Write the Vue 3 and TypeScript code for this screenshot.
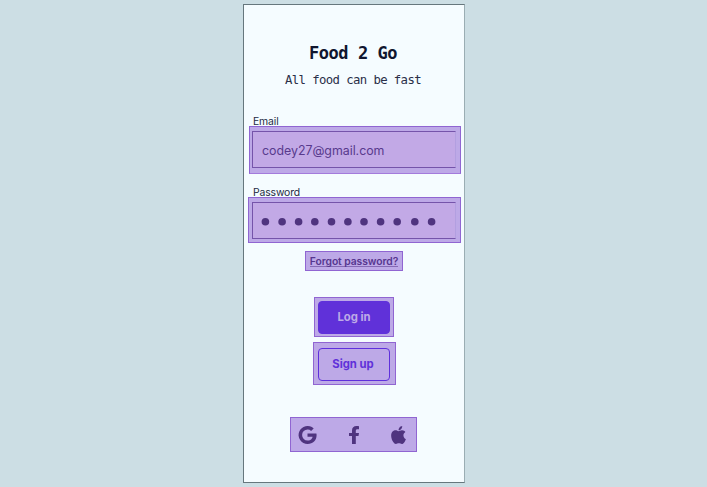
<script setup lang="ts">
const dots: number[] = [12.4, 29.1, 45.6, 61.8, 78.5, 94.9, 111, 127.6, 144.2, 161.8, 178.6]
</script>

<template>
  <main class="stage">
    <section class="phone">
      <h1 class="title">Food 2 Go</h1>
      <p class="tagline">All food can be fast</p>

      <label class="label email-label">Email</label>
      <div class="focus email-focus">
        <div class="field"><span class="value">codey27@gmail.com</span></div>
      </div>

      <label class="label password-label">Password</label>
      <div class="focus password-focus">
        <div class="field">
          <svg class="dots" viewBox="0 0 202 35" aria-label="Hidden password">
            <circle v-for="x in dots" :key="x" :cx="x" cy="18.7" r="3.8" />
          </svg>
        </div>
      </div>

      <div class="focus forgot-focus"><a class="forgot">Forgot password?</a></div>
      <div class="focus login-focus"><button class="btn primary"><span>Log in</span></button></div>
      <div class="focus signup-focus"><button class="btn outline"><span>Sign up</span></button></div>

      <div class="focus social">
        <svg class="google" viewBox="0 0 19 18">
          <path d="M9.5 7.4h8.9c.1.6.2 1.1.2 1.7 0 5.3-3.6 8.9-9 8.9A9 9 0 1 1 15.7 2.4l-2.6 2.5A5.2 5.2 0 0 0 9.6 3.5a5.5 5.5 0 1 0 0 11c3.5 0 4.8-2.5 5-3.8h-5.1z" />
        </svg>
        <svg class="facebook" viewBox="0 0 10 18">
          <path d="M9.5 10.1 10 6.900H6.800V4.800c0-.9.4-1.500 1.800-1.500H10V.2S8.700 0 7.500 0C4.700 0 3 1.600 3 4.400v2.500H0v3.200h3V18h3.800v-7.900z" />
        </svg>
        <svg class="apple" viewBox="0 32 384 448" preserveAspectRatio="none">
          <path d="M318.700 268.700c-.2-36.700 16.400-64.400 50-84.800-18.800-26.900-47.200-41.700-84.700-44.600-35.500-2.800-74.300 20.700-88.500 20.700-15 0-49.400-19.700-76.400-19.700C63.300 141.200 4 184.800 4 273.500q0 39.300 14.400 81.200c12.800 36.700 59 126.700 107.200 125.200 25.200-.6 43-17.900 75.800-17.900 31.800 0 48.300 17.900 76.400 17.900 48.600-.7 90.400-82.500 102.600-119.300-65.200-30.700-61.700-90-61.700-91.900zm-56.600-164.200c27.300-32.400 24.800-61.900 24-72.500-24.100 1.400-52 16.400-67.900 34.900-17.500 19.800-27.800 44.300-25.600 71.900 26.100 2 49.900-11.400 69.500-34.300z" />
        </svg>
      </div>
    </section>
  </main>
</template>

<style>
body {
  background: #ccdee4;
}
</style>

<style scoped>
* {
  box-sizing: border-box;
}
.stage {
  height: 487px;
  padding-top: 4px;
  padding-left: 243px;
  overflow: hidden;
  background: #ccdee4;
  font-family: Inter, "Liberation Sans", sans-serif;
}
.phone {
  display: flex;
  flex-direction: column;
  align-items: flex-start;
  width: 222px;
  height: 479px;
  border: 1px solid #66777d;
  border-right-color: #9aadb3;
  background: #f5fcff;
  color: #10162f;
}
.title,
.tagline {
  margin: 0;
  align-self: center;
  font-family: "DejaVu Sans Mono", monospace;
  white-space: pre;
}
.title {
  margin-top: 35px;
  margin-right: 2px;
  font-size: 17px;
  letter-spacing: -0.44px;
  line-height: 26px;
  font-weight: 700;
}
.tagline {
  margin-top: 5px;
  margin-right: 2px;
  font-size: 12.300px;
  letter-spacing: -0.6px;
  line-height: 18px;
  color: #2a2f48;
}
.label {
  margin-left: 9px;
  height: 13px;
  font-size: 10.400px;
  letter-spacing: -0.13px;
  line-height: 13px;
  color: #242b43;
}
.focus {
  display: flex;
  flex-shrink: 0;
  background: #bda9e7;
  border: 1px solid #9065d2;
}
.email-label {
  margin-top: 26px;
}
.email-focus {
  margin-left: 5px;
  margin-top: -2px;
  width: 212px;
  height: 48px;
  padding: 4px 0 0 2px;
  border-bottom-color: #a37bdc;
}
.field {
  display: flex;
  align-items: center;
  width: 204px;
  height: 37px;
  border: 1px solid #7554aa;
  border-right-color: #b29fe0;
  background: #c2a9e6;
}
.value {
  padding-top: 2px;
  padding-left: 9px;
  font-size: 12.400px;
  letter-spacing: -0.03px;
  color: #583a8d;
}
.password-label {
  margin-top: 12px;
}
.password-focus {
  margin-left: 4px;
  margin-top: -2px;
  width: 213px;
  height: 46px;
  padding: 4px 0 0 3px;
}
.dots {
  width: 202px;
  height: 35px;
  fill: #4f347f;
}
.forgot-focus {
  justify-content: center;
  margin: 8px 0 0 61px;
  width: 98px;
  height: 20px;
}
.forgot {
  height: 15px;
  border-bottom: 1px solid #8569b5;
  font-size: 10.300px;
  letter-spacing: -0.05px;
  line-height: 19px;
  font-weight: 600;
  color: #56368f;
  white-space: nowrap;
}
.login-focus {
  margin: 26px 0 0 70px;
  width: 80px;
  height: 40px;
  padding: 3px 0 0 3px;
}
.signup-focus {
  margin: 5px 0 0 69px;
  width: 83px;
  height: 43px;
  padding: 5px 0 0 4px;
}
.btn {
  width: 72px;
  height: 33px;
  padding: 0;
  flex-shrink: 0;
  border: 1px solid #5f30dc;
  border-radius: 4px;
  font-family: inherit;
  font-size: 11.300px;
  letter-spacing: 0;
  line-height: 15px;
  font-weight: 700;
}
.primary {
  background: #6031d9;
  color: #bda9e7;
}
.outline {
  padding-right: 2px;
  background: transparent;
  color: #6031d9;
}
.social {
  margin: 32px 0 0 46px;
  width: 127px;
  height: 35px;
  align-items: flex-start;
  padding: 8px 0 0 7px;
}
.social svg {
  fill: #4f347f;
}
.google {
  width: 19px;
  height: 18px;
}
.facebook {
  width: 10px;
  height: 18px;
  margin-left: 32px;
}
.apple {
  width: 15px;
  height: 18px;
  margin-left: 32px;
}
</style>
